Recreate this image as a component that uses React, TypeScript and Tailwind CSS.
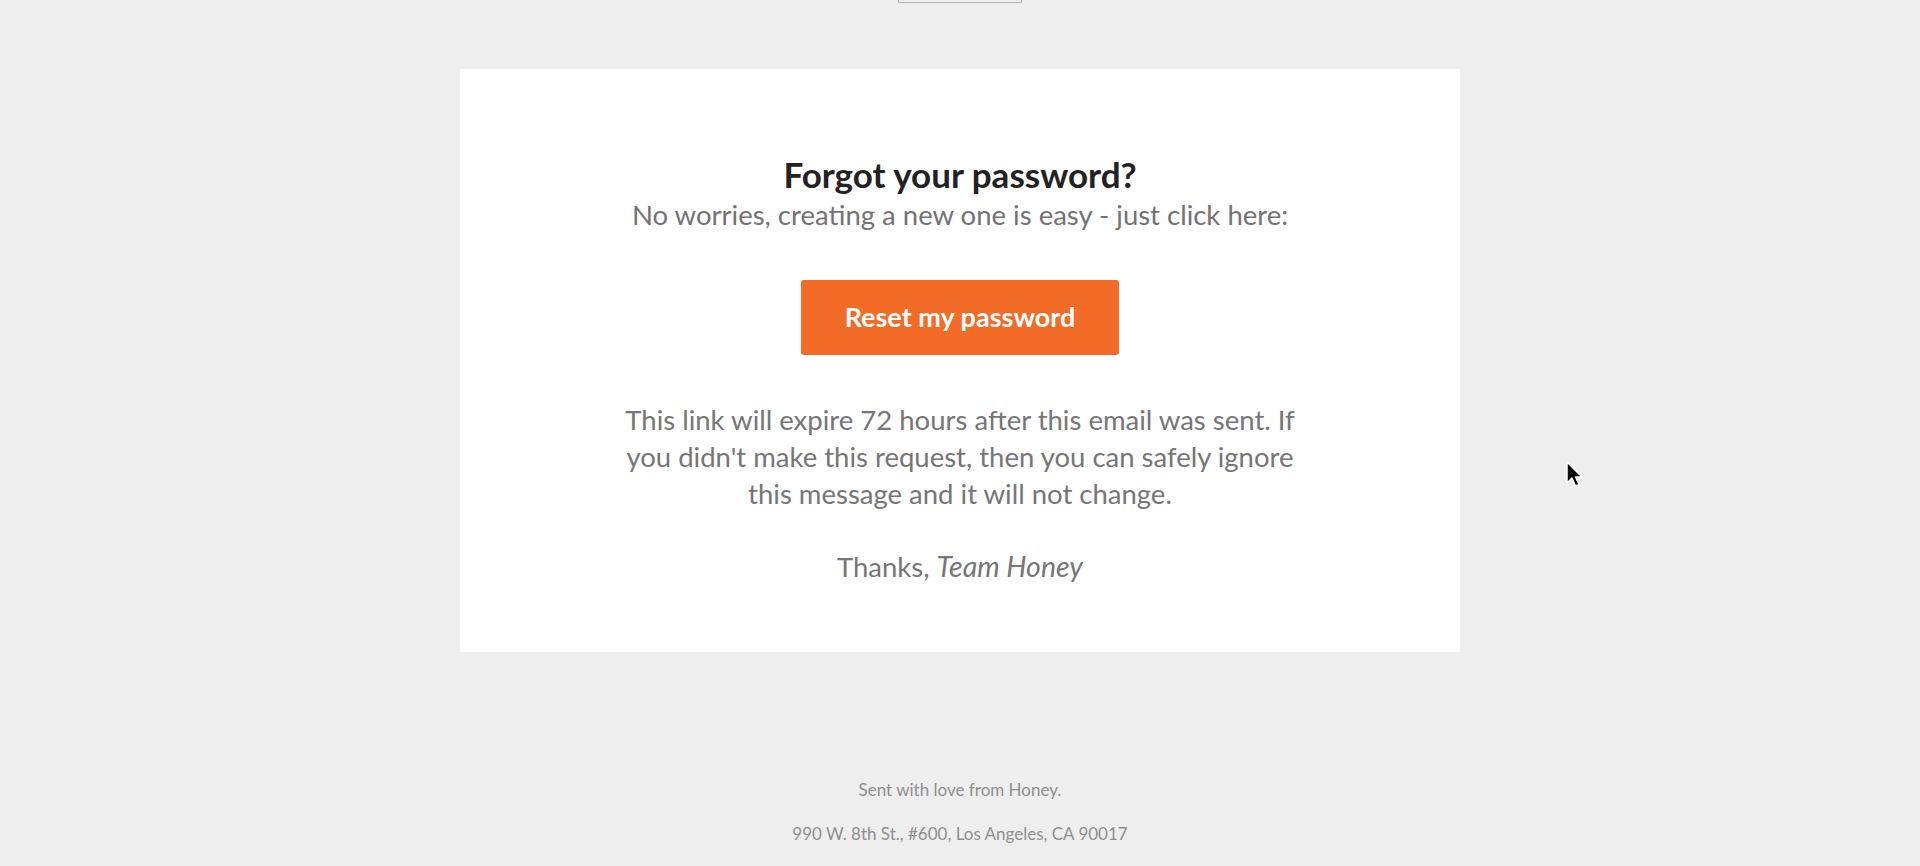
import { FC } from "react";

const font = { fontFamily: "Lato, 'Open Sans', sans-serif" };

const Cursor: FC = () => (
  <svg
    className="absolute left-[1565px] top-[461px]"
    width="20"
    height="28"
    viewBox="0 0 20 28"
  >
    <path
      d="M2 1 L2 22 L7 17 L10.5 25 L14 23.5 L10.5 16 L17 16 Z"
      fill="#000"
      stroke="#fff"
      strokeWidth="1.5"
      strokeLinejoin="round"
    />
  </svg>
);

const App: FC = () => {
  return (
    <div
      className="relative h-[866px] overflow-hidden bg-[#eeeeee] flex flex-col items-center"
      style={font}
    >
      {/* logo box cut off at top */}
      <div className="w-[124px] h-[3px] border-x border-b border-[#b5b5b5] bg-[#f0f0f0]" />

      <div className="mt-[66px] w-[1000px] bg-white pt-[85px] pb-[67px] flex flex-col items-center text-center">
        <h1 className="text-[35px] leading-[40px] font-bold text-[#222222]">
          Forgot your password?
        </h1>
        <p className="mt-[3px] text-[27.5px] leading-[36px] text-[#737373]">
          No worries, creating a new one is easy - just click here:
        </p>

        <a
          href="#"
          className="mt-[47px] w-[318px] h-[75px] rounded-[3px] bg-[#f26b27] flex items-center justify-center text-white text-[27px] font-bold"
        >
          Reset my password
        </a>

        <p className="mt-[46px] text-[27.5px] leading-[37px] text-[#767676]">
          This link will expire 72 hours after this email was sent. If
          <br />
          you didn't make this request, then you can safely ignore
          <br />
          this message and it will not change.
        </p>
        <p className="mt-[36px] text-[27.5px] leading-[37px] text-[#767676]">
          Thanks, <em className="text-[28.5px]">Team Honey</em>
        </p>
      </div>

      <div className="mt-[126px] flex flex-col items-center gap-[20px] text-[17px] leading-[24px] text-[#8f8f8f]">
        <p>Sent with love from Honey.</p>
        <p>990 W. 8th St., #600, Los Angeles, CA 90017</p>
      </div>

      <Cursor />
    </div>
  );
};

export default App;
